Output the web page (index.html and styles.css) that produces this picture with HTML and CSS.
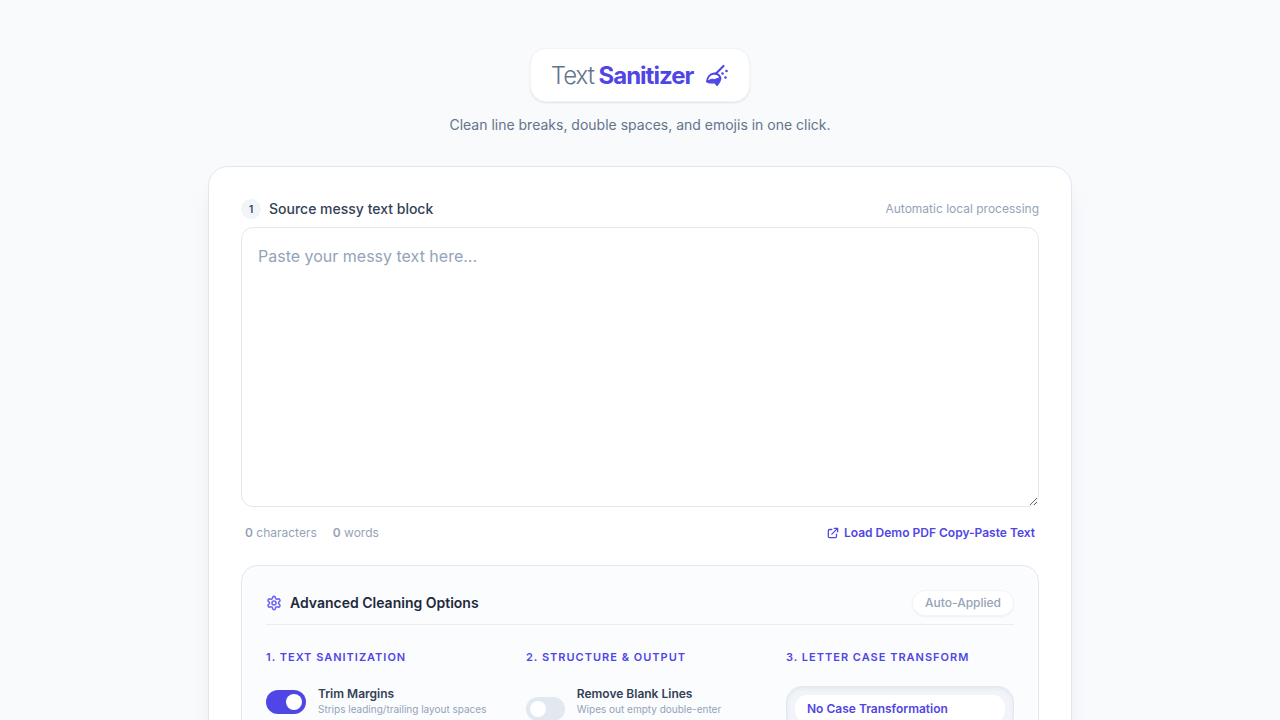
FILE: index.html
```html
<!DOCTYPE html>
<html lang="en">
<head>
    <meta charset="UTF-8">
    <meta name="viewport" content="width=device-width, initial-scale=1.0">
    <title>Text Sanitizer</title>
    <link rel="stylesheet" href="styles.css">
</head>
<body>
    <div class="container">
        <header class="page-header">
            <h1 class="logo">
                <span><span class="logo-light">Text</span> Sanitizer</span>
                <svg class="logo-icon" viewBox="0 0 24 24" fill="none" stroke="currentColor" stroke-linecap="round" stroke-linejoin="round" aria-hidden="true">
                    <path d="M18.500 2 10.500 10" stroke-width="2.200"/>
                    <path d="M2 17.500c.3-4 3-7.500 7-8h2c2.500.8 4 2.500 4.500 5-.3 2.500-1.500 4.500-3.500 6.500l-2-2.500c-3 .3-5.500 0-8-1z" stroke-width="2"/>
                    <path d="M3 17c2.500-2 4.500-2 6.500-1.500l4.500-1.500.5 2-2.500 4-2-2.500z" fill="currentColor" stroke-width="1"/>
                    <g fill="currentColor" stroke="none">
                        <circle cx="21.500" cy="7" r="1.300"/>
                        <circle cx="17.500" cy="9.500" r="1.300"/>
                        <circle cx="20.500" cy="13.500" r="1.300"/>
                    </g>
                </svg>
            </h1>
            <p class="tagline">Clean line breaks, double spaces, and emojis in one click.</p>
        </header>

        <main class="card">
            <div class="row">
                <label class="source-label" for="sourceText"><span class="step">1</span>Source messy text block</label>
                <span class="note">Automatic local processing</span>
            </div>
            <textarea id="sourceText" class="source-text" placeholder="Paste your messy text here..."></textarea>

            <div class="row stats">
                <div class="counts">
                    <span><strong id="charCount">0</strong> characters</span>
                    <span><strong id="wordCount">0</strong> words</span>
                </div>
                <button type="button" class="demo-btn">
                    <svg class="demo-icon" viewBox="0 0 24 24" fill="none" stroke="currentColor" stroke-width="2.200" stroke-linecap="round" stroke-linejoin="round" aria-hidden="true">
                        <path d="M10 6H6a2 2 0 0 0-2 2v10a2 2 0 0 0 2 2h10a2 2 0 0 0 2-2v-4M14 4h6v6M20 4 10 14"/>
                    </svg>
                    Load Demo PDF Copy-Paste Text
                </button>
            </div>

            <section class="options">
                <div class="row options-header">
                    <h2>
                        <svg class="gear" viewBox="0 0 24 24" fill="none" stroke="currentColor" stroke-width="2.400" stroke-linecap="round" stroke-linejoin="round" aria-hidden="true">
                            <path d="M12.220 2h-.44a2 2 0 0 0-2 2v.18a2 2 0 0 1-1 1.730l-.43.25a2 2 0 0 1-2 0l-.15-.08a2 2 0 0 0-2.730.73l-.22.38a2 2 0 0 0 .73 2.730l.15.1a2 2 0 0 1 1 1.720v.51a2 2 0 0 1-1 1.740l-.15.09a2 2 0 0 0-.73 2.730l.22.38a2 2 0 0 0 2.730.73l.15-.08a2 2 0 0 1 2 0l.43.25a2 2 0 0 1 1 1.730V20a2 2 0 0 0 2 2h.44a2 2 0 0 0 2-2v-.18a2 2 0 0 1 1-1.730l.43-.25a2 2 0 0 1 2 0l.15.08a2 2 0 0 0 2.730-.73l.22-.39a2 2 0 0 0-.73-2.730l-.15-.08a2 2 0 0 1-1-1.740v-.5a2 2 0 0 1 1-1.740l.15-.09a2 2 0 0 0 .73-2.730l-.22-.38a2 2 0 0 0-2.730-.73l-.15.08a2 2 0 0 1-2 0l-.43-.25a2 2 0 0 1-1-1.730V4a2 2 0 0 0-2-2z"/>
                            <circle cx="12" cy="12" r="3"/>
                        </svg>
                        Advanced Cleaning Options
                    </h2>
                    <span class="badge">Auto-Applied</span>
                </div>

                <div class="option-grid">
                    <div>
                        <h3>1. Text Sanitization</h3>
                        <label class="option">
                            <input type="checkbox" class="toggle" checked>
                            <span>
                                <span class="option-name">Trim Margins</span>
                                <span class="option-desc">Strips leading/trailing layout spaces</span>
                            </span>
                        </label>
                    </div>
                    <div>
                        <h3>2. Structure &amp; Output</h3>
                        <label class="option">
                            <input type="checkbox" class="toggle">
                            <span>
                                <span class="option-name">Remove Blank Lines</span>
                                <span class="option-desc">Wipes out empty double-enter spacing</span>
                            </span>
                        </label>
                    </div>
                    <div>
                        <h3>3. Letter Case Transform</h3>
                        <div class="case-list">
                            <button type="button" class="case-btn">No Case Transformation</button>
                        </div>
                    </div>
                </div>
            </section>
        </main>
    </div>

    <script>
        // Update the counters while typing
        document.getElementById("sourceText").addEventListener("input", function() {
            var text = this.value;
            var words = text.trim() ? text.trim().split(/\s+/).length : 0;
            document.getElementById("charCount").textContent = text.length;
            document.getElementById("wordCount").textContent = words;
        });
    </script>
</body>
</html>
```
FILE: styles.css
```css
* {
    box-sizing: border-box;
}

body {
    margin: 0;
    font-family: Inter, "Open Sans", sans-serif;
    background-color: #f8fafc;
    color: #334155;
}

h1, h2, h3, p {
    margin: 0;
}

button, textarea {
    font-family: inherit;
}

.container {
    max-width: 896px;
    margin: 0 auto;
    padding: 48px 16px;
}

.page-header {
    display: flex;
    flex-direction: column;
    align-items: center;
    gap: 12px;
    margin-bottom: 30px;
}

.logo {
    display: flex;
    align-items: center;
    gap: 12px;
    padding: 9px 20px 7px;
    background-color: #fff;
    border: 1px solid #f1f5f9;
    border-radius: 16px;
    box-shadow: 0 1px 2px rgba(15, 23, 42, 0.1);
    font-size: 24px;
    line-height: 36px;
    font-weight: 700;
    letter-spacing: -1px;
    color: #4f46e5;
}

.logo-light {
    font-weight: 300;
    color: #64748b;
}

.logo-icon {
    width: 24px;
    height: 24px;
}

.tagline {
    font-size: 14px;
    line-height: 22px;
    color: #64748b;
}

.card {
    padding: 32px;
    background-color: #fff;
    border: 1px solid #e2e8f0;
    border-radius: 20px;
    box-shadow: 0 20px 25px -5px rgba(148, 163, 184, 0.15), 0 8px 10px -6px rgba(148, 163, 184, 0.15);
}

.row {
    display: flex;
    justify-content: space-between;
    align-items: center;
}

.source-label {
    display: flex;
    align-items: center;
    gap: 8px;
    font-size: 14px;
    line-height: 20px;
    font-weight: 500;
}

.step {
    width: 20px;
    height: 20px;
    border-radius: 50%;
    background-color: #f1f5f9;
    font-size: 10px;
    font-weight: 600;
    text-align: center;
}

.note {
    font-size: 12px;
    line-height: 20px;
    color: #94a3b8;
}

.source-text {
    display: block;
    width: 100%;
    height: 280px;
    margin-top: 8px;
    padding: 16px;
    background-color: #fff;
    border: 1px solid #e2e8f0;
    border-radius: 12px;
    font-size: 16px;
    line-height: 24px;
    color: #334155;
    resize: vertical;
}

.source-text::placeholder {
    color: #94a3b8;
}

.stats {
    margin: 16px 0 22px;
    padding: 0 4px;
    font-size: 12px;
    line-height: 20px;
    color: #94a3b8;
}

.counts {
    display: flex;
    gap: 16px;
}

.counts strong {
    font-weight: 600;
}

.demo-btn {
    display: flex;
    align-items: center;
    gap: 4px;
    padding: 0;
    border: none;
    background: none;
    font-size: 12px;
    line-height: 20px;
    font-weight: 600;
    color: #4f46e5;
    cursor: pointer;
}

.demo-icon {
    width: 14px;
    height: 14px;
}

.options {
    padding: 24px;
    background-color: #fbfcfe;
    border: 1px solid #e2e8f0;
    border-radius: 16px;
}

.options-header {
    padding-bottom: 8px;
    border-bottom: 1px solid #e9eef4;
}

.options-header h2 {
    display: flex;
    align-items: center;
    gap: 8px;
    font-size: 14px;
    line-height: 20px;
    font-weight: 600;
    color: #1e293b;
}

.gear {
    width: 16px;
    height: 16px;
    color: #6f66f1;
}

.badge {
    padding: 4px 12px;
    background-color: #fff;
    border: 1px solid #f1f5f9;
    border-radius: 16px;
    box-shadow: 0 1px 2px rgba(15, 23, 42, 0.05);
    font-size: 12px;
    line-height: 16px;
    font-weight: 500;
    color: #94a3b8;
}

.option-grid {
    display: grid;
    grid-template-columns: repeat(3, 1fr);
    gap: 32px;
    padding-top: 24px;
}

.option-grid h3 {
    margin-bottom: 21px;
    font-size: 11px;
    line-height: 16px;
    font-weight: 600;
    letter-spacing: 1px;
    text-transform: uppercase;
    color: #4f46e5;
}

.option {
    display: flex;
    align-items: center;
    gap: 12px;
    cursor: pointer;
}

.toggle {
    appearance: none;
    display: flex;
    align-items: center;
    width: 40px;
    height: 24px;
    margin: 0;
    padding: 4px;
    border-radius: 12px;
    background-color: #e2e8f0;
    cursor: pointer;
}

.toggle::before {
    content: "";
    width: 16px;
    height: 16px;
    border-radius: 50%;
    background-color: #fff;
}

.toggle:checked {
    justify-content: flex-end;
    background-color: #4f46e5;
}

.option-name,
.option-desc {
    display: block;
}

.option-name {
    font-size: 12px;
    line-height: 16px;
    font-weight: 600;
}

.option-desc {
    font-size: 10px;
    line-height: 15px;
    color: #94a3b8;
}

.case-list {
    padding: 8px;
    background-color: #f1f5f9;
    border: 1px solid #e2e8f0;
    border-radius: 16px;
    box-shadow: inset 0 2px 4px rgba(15, 23, 42, 0.05);
}

.case-btn {
    width: 100%;
    padding: 6px 12px;
    border: none;
    border-radius: 12px;
    background-color: #fff;
    font-size: 12px;
    line-height: 16px;
    font-weight: 600;
    text-align: left;
    color: #4f46e5;
    cursor: pointer;
}
```
